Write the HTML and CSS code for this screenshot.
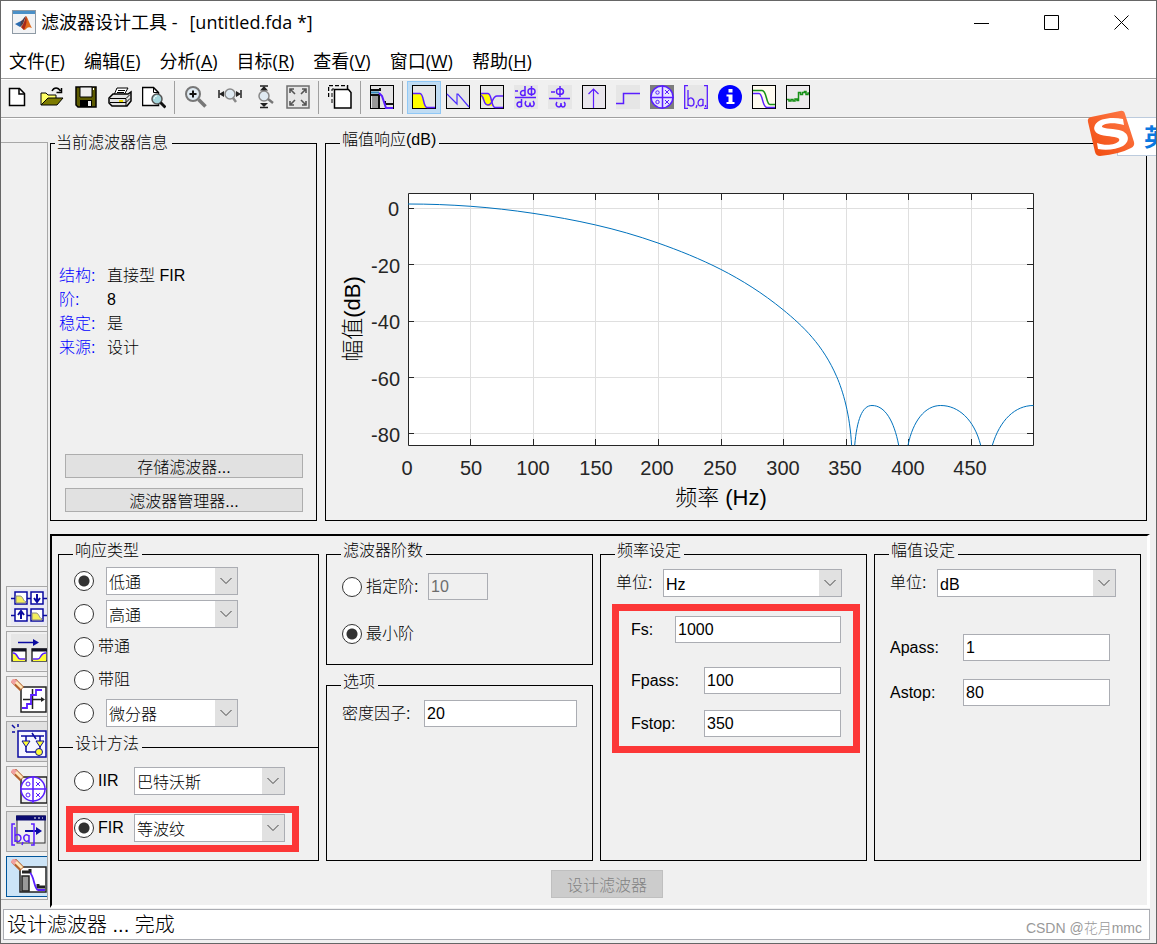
FILE: index.html
```
<!DOCTYPE html>
<html lang="zh-CN">
<head>
<meta charset="utf-8">
<title>滤波器设计工具 - [untitled.fda *]</title>
<link rel="stylesheet" href="styles.css">
</head>
<body>
<div class="window">
  <header class="titlebar">
    <svg class="app-icon" viewBox="0 0 24 24" aria-hidden="true">
      <rect x="0.5" y="0.5" width="23" height="23" fill="#f2f3f5" stroke="#8e9aa5"/>
      <path d="M1 2.5h22" stroke="#4a90c8" stroke-width="3"/>
      <path d="M3 14l6-3 3 2-4 4z" fill="#2b6cb0"/>
      <path d="M9 11c2-1 3-4 5-5l-3 8-3 3z" fill="#4c3f4f"/>
      <path d="M14 6c2 2 4 9 6 12-2-1-4-1-5 0s-2 2-3 2l-3-3c2-2 4-7 5-11z" fill="#e06a1c"/>
      <path d="M14 6c1 3 1 8-2 14l-3-3c2-1 4-7 5-11z" fill="#a82a1a"/>
    </svg>
    <h1 class="title"><span>滤波器设计工具 -</span><span>[untitled.fda *]</span></h1>
    <div class="caption-buttons">
      <button class="caption" aria-label="最小化"><svg viewBox="0 0 16 16"><path d="M0 8.5h15"/></svg></button>
      <button class="caption" aria-label="最大化"><svg viewBox="0 0 16 16"><path d="M.5 .5h14v14h-14z"/></svg></button>
      <button class="caption" aria-label="关闭"><svg viewBox="0 0 16 16"><path d="M.5 .5l14 14M14.500 .5l-14 14"/></svg></button>
    </div>
  </header>
  <nav class="menubar">
    <button>文件(<u>F</u>)</button>
    <button>编辑(<u>E</u>)</button>
    <button>分析(<u>A</u>)</button>
    <button>目标(<u>R</u>)</button>
    <button>查看(<u>V</u>)</button>
    <button>窗口(<u>W</u>)</button>
    <button>帮助(<u>H</u>)</button>
  </nav>
  <div class="toolbar">
    <button aria-label="新建"><svg viewBox="0 0 24 24"><path d="M3.500 3.500h10l5 5v12h-15z" fill="#fff" stroke="#000" stroke-width="1.500"/><path d="M13 3.500v5.500h5.500" fill="none" stroke="#000" stroke-width="1.500"/></svg></button>
    <button aria-label="打开"><svg viewBox="0 0 24 24"><path d="M1 20V8h5l2 2h8v4" fill="#ffff66" stroke="#000"/><path d="M1 20l7-7h15l-6 7z" fill="#7d7b00" stroke="#000"/><path d="M12 6c2-4 6-4 8.500 0M21.500 3v4.500h-5" fill="none" stroke="#000" stroke-width="1.500"/></svg></button>
    <button aria-label="保存"><svg viewBox="0 0 24 24"><path d="M2 2h20v20H4l-2-2z" fill="#5c5a00" stroke="#000" stroke-width="1.500"/><path d="M6 2h12v10H6z" fill="#efefef" stroke="#000"/><path d="M6 15h12v7H6z" fill="#000"/><path d="M14 16h3v5h-3z" fill="#efefef"/><path d="M19.500 3v2" stroke="#fff"/></svg></button>
    <button aria-label="打印"><svg viewBox="0 0 24 24"><path d="M6 10l3-7h11l-4 7" fill="#fff" stroke="#000"/><path d="M10 5.500h7M9 7.500h7" stroke="#000"/><path d="M1 13l4-4h15l3-2v9l-4 5H4l-3-3z" fill="#e4e4e4" stroke="#000" stroke-width="1.500"/><path d="M2 13.500h16l4-4M2 17.500h16l4-4M18 14v7" fill="none" stroke="#000"/><path d="M11 16h4" stroke="#e6d800" stroke-width="2"/></svg></button>
    <button aria-label="打印预览"><svg viewBox="0 0 24 24"><path d="M.5 2.500h11l5 5v13H.5z" fill="#fff" stroke="#000" stroke-width="1.500"/><path d="M11.500 2.500v5h5" fill="none" stroke="#000"/><circle cx="15" cy="14" r="5" fill="#a5d6dc" stroke="#555" stroke-width="1.500"/><path d="M12 14c0-2 2-3 3-3" stroke="#fff" fill="none"/><path d="M18.500 17.500l5 5" stroke="#111" stroke-width="3"/></svg></button>
    <span class="sep"></span>
    <button aria-label="放大"><svg viewBox="0 0 24 24"><circle cx="9" cy="9" r="7" fill="#dfeaf2" stroke="#777" stroke-width="2"/><path d="M5.500 9h7M9 5.500v7" stroke="#111" stroke-width="2"/><path d="M14.500 14.500l7 7" stroke="#777" stroke-width="3.500"/></svg></button>
    <button aria-label="X 轴缩放"><svg viewBox="0 0 24 24"><circle cx="12" cy="9" r="5" fill="#dfeaf2" stroke="#888" stroke-width="1.500"/><path d="M15 13l3 4" stroke="#888" stroke-width="2.500"/><path d="M1 5v8M23 5v8" stroke="#222" stroke-width="1.500"/><path d="M1 9l5-3v6zM23 9l-5-3v6z" fill="#222"/></svg></button>
    <button aria-label="Y 轴缩放"><svg viewBox="0 0 24 24"><circle cx="12" cy="11" r="5" fill="#dfeaf2" stroke="#888" stroke-width="1.500"/><path d="M16 14l5 4" stroke="#777" stroke-width="2.500"/><path d="M8 1h8M8 22.500h8" stroke="#222" stroke-width="1.500"/><path d="M12 1l-4 4.500h8zM12 22l-4-4h8z" fill="#222"/></svg></button>
    <button aria-label="完整视图"><svg viewBox="0 0 24 24"><rect x="1" y="1" width="22" height="22" fill="#e6e6e6" stroke="#6d6d6d" stroke-width="1.500"/><path d="M4 8V4h4M16 4h4v4M20 16v4h-4M8 20H4v-4M4 4l5 5M20 4l-5 5M20 20l-5-5M4 20l5-5" fill="none" stroke="#555" stroke-width="1.600"/></svg></button>
    <span class="sep"></span>
    <button aria-label="复制图窗"><svg viewBox="0 0 24 24"><path d="M.5 12V.5h19V4" fill="none" stroke="#000" stroke-width="1.500" stroke-dasharray="4 2"/><path d="M4 18V4h4" fill="none" stroke="#000" stroke-dasharray="4 2"/><path d="M6.500 4.500h14l2.500 3v15.500H6.500z" fill="#fff" stroke="#000" stroke-width="1.500"/></svg></button>
    <span class="sep"></span>
    <button aria-label="滤波器设定"><svg viewBox="0 0 24 24"><rect x=".5" y=".5" width="23" height="23" fill="#e4e4e4" stroke="#000"/><path d="M1 5h9V3M1 10h8v13M15 16v3h8" fill="none" stroke="#111" stroke-width="2"/><path d="M1 7.500h8" stroke="#38b" stroke-width="2"/><path d="M9 8l3 3 4 12h7" fill="none" stroke="#5a1eff" stroke-width="2"/><path d="M2 11h6v12H2z" fill="#999"/></svg></button>
    <span class="sep"></span>
    <button class="active" aria-label="幅值响应"><svg viewBox="0 0 24 24"><rect x=".5" y=".5" width="23" height="23" fill="#e6e6e6" stroke="#000"/><path d="M1 9h8l5 14H1z" fill="#ff0"/><path d="M1 8.500h7c4 0 3 14 7 14h8" fill="none" stroke="#5a1eff" stroke-width="1.500"/></svg></button>
    <button aria-label="相位响应"><svg viewBox="0 0 24 24"><rect x=".5" y=".5" width="23" height="23" fill="#e6e6e6" stroke="#000"/><path d="M1 9l10 10V9h1l11 13" fill="none" stroke="#4b2cff" stroke-width="1.200"/></svg></button>
    <button aria-label="幅值和相位响应"><svg viewBox="0 0 24 24"><rect x=".5" y=".5" width="23" height="23" fill="#e6e6e6" stroke="#000"/><path d="M1 9h8l4 10-1 2H7L1 12z" fill="#ff0"/><path d="M1 8.500h7c4 0 3 14 7 14h8" fill="none" stroke="#5a1eff" stroke-width="1.500"/><path d="M1 10c4 3 2 10 7 10 5 0 4-9 9-9h6" fill="none" stroke="#5a1eff" stroke-width="1.500"/></svg></button>
    <button aria-label="群延迟"><svg viewBox="0 0 24 24"><rect width="24" height="24" fill="#e6e6e6"/><g fill="none" stroke="#5a1eff" stroke-width="1.500"><path d="M1 6h3M11 1v10M11 6c-5-2-6 4.500-2 4.500 1 0 2-1 2-2M17.500 1v10M14 6.500a3.500 3 0 1 0 7 0a3.500 3 0 1 0-7 0M1 12.500h21M7.500 14v8M7.500 17.500c-5-2-6 4-2 4.500 1 0 2-1 2-2M12 16c-2 3 0 5.500 2 5.500s2-2 2-4c0 3 1 4 2 4 2 0 3-3 1-5.500"/></g></svg></button>
    <button aria-label="相位延迟"><svg viewBox="0 0 24 24"><rect width="24" height="24" fill="#e6e6e6"/><g fill="none" stroke="#5a1eff" stroke-width="1.500"><path d="M3 7h4M12 1v11M8.500 6.500a3.500 3 0 1 0 7 0a3.500 3 0 1 0-7 0M1 13.500h21M9 17c-2 3 0 5 2 5s2-2 2-4c0 3 1 4 2 4 2 0 3-3 1-5"/></g></svg></button>
    <button aria-label="冲激响应"><svg viewBox="0 0 24 24"><rect x=".5" y=".5" width="23" height="23" fill="#e9e6ec" stroke="#000"/><path d="M11.500 23V4M6.500 9l5-5 5 5" fill="none" stroke="#5a1eff" stroke-width="1.200"/></svg></button>
    <button aria-label="阶跃响应"><svg viewBox="0 0 24 24"><rect width="24" height="24" fill="#e6e6e6"/><path d="M0 18.500h7.500v-10H24" fill="none" stroke="#5a1eff" stroke-width="1.500"/></svg></button>
    <button aria-label="零极点图"><svg viewBox="0 0 24 24"><rect width="24" height="24" fill="#7d7d7d"/><circle cx="12" cy="12" r="11" fill="#e9e6ff" stroke="#5a1eff" stroke-width="1.500"/><path d="M12.500 0v24M0 12.500h24" stroke="#5a1eff" stroke-width="1.500"/><path d="M15 5l4 4M19 5l-4 4M15 15l4 4M19 15l-4 4" stroke="#5a1eff"/><circle cx="7.500" cy="7.500" r="1.700" fill="none" stroke="#5a1eff"/><circle cx="7.500" cy="17" r="1.700" fill="none" stroke="#5a1eff"/></svg></button>
    <button aria-label="滤波器系数"><svg viewBox="0 0 24 24"><rect width="24" height="24" fill="#e6e6e6"/><g fill="none" stroke="#5a1eff" stroke-width="1.300"><path d="M4 .7H.7v22.600H4M20 .7h3.300v22.600H20M4 5v16M4 15c2-4 6-2 6 2.500s-4 4-6 2M13 20l-1 3M19 14v7M19 15c-2-2-5 0-5 3s3 4 5 1.500M21.500 20v2"/></g></svg></button>
    <button aria-label="滤波器信息"><svg viewBox="0 0 24 24"><circle cx="12" cy="12" r="12" fill="#00f"/><path d="M10.500 4h4v3.500h-4zM8.500 9.500h6V17h2v2h-8v-2h2v-5.500h-2z" fill="#fff"/></svg></button>
    <button aria-label="幅值响应估计"><svg viewBox="0 0 24 24"><rect x=".5" y=".5" width="23" height="23" fill="#fffbf0" stroke="#000"/><path d="M1 5.500h9c5 0 4 14 8 14h5" fill="none" stroke="#169016" stroke-width="1.600"/><path d="M1 8.500h6c4 0 3 14 8 14h8" fill="none" stroke="#5a1eff" stroke-width="1.500"/></svg></button>
    <button aria-label="舍入噪声功率谱"><svg viewBox="0 0 24 24"><rect x=".5" y=".5" width="23" height="23" fill="#eceaec" stroke="#000"/><path d="M1 14.500h2v1.500h2v-1.500h2v1.500h2v-2h2v1.500h1.500v-8h2v2h2v-2h2v-1h1.500v3h2v-1.500h1" fill="none" stroke="#169016" stroke-width="1.500"/></svg></button>
  </div>

  <main class="workspace">
    <aside class="sidebar">
      <button aria-label="创建多速率滤波器"><svg viewBox="0 0 36 36"><rect width="36" height="36" fill="#e9e9f4"/><path d="M0 9.500h36M0 26.500h36" stroke="#0a0aa0" stroke-width="1.500"/><g fill="#fff" stroke="#0a0aa0" stroke-width="1.500"><path d="M4 3h12v12H4zM20 3h12v12H20zM4 20h12v12H4zM20 20h12v12H20z"/></g><path d="M5 7h4c3 0 3 5 6 6v1H5zM21 24h4c3 0 3 5 6 6v1H21z" fill="#f3ef5c" stroke="#888"/><path d="M26 5v7M23 9l3 4 3-4M10 30v-7M7 26l3-4 3 4" fill="none" stroke="#0a0aa0" stroke-width="2"/></svg></button>
      <button aria-label="变换滤波器"><svg viewBox="0 0 36 36"><rect width="36" height="36" fill="#e6e6e6"/><path d="M7 8.500h16" stroke="#0a0aa0" stroke-width="1.500"/><path d="M22 5l6 3.500-6 3.500z" fill="#0a0aa0"/><path d="M1 15h14v12H1zM21 15h15v12H21z" fill="#fff" stroke="#333" stroke-width="1.500"/><path d="M2 20c5 0 4 5 7 5h5v2H2zM35 20c-6 0-5 5-8 5h-5v2h13z" fill="#ff3"/><path d="M2 19c5 0 4 6 7 6h5M35 19c-6 0-5 6-8 6h-5" fill="none" stroke="#5a1eff" stroke-width="1.500"/><path d="M1 16h14M21 16h15" stroke="#112" stroke-width="3"/></svg></button>
      <button aria-label="设置量化参数"><svg viewBox="0 0 36 36"><rect x="10" y="8" width="25" height="25" fill="#fff" stroke="#222" stroke-width="1.500"/><path d="M21.500 10v20M12 20.500h20" stroke="#222" stroke-width="1.500"/><path d="M30 18l4 2.500-4 2.500z" fill="#222"/><path d="M11 29h5v-4h4v-9h5v-5h6" fill="none" stroke="#5a1eff" stroke-width="1.800"/><path d="M2 1l9 9" stroke="#b4622d" stroke-width="6"/><path d="M1 1l4 3" stroke="#f0a0a0" stroke-width="5"/><path d="M5 3l6 6" stroke="#ffe6bb" stroke-width="3"/></svg></button>
      <button class="shade" aria-label="实现模型"><svg viewBox="0 0 36 36"><rect x="7" y="7" width="28" height="26" fill="#f7f7ff" stroke="#0a0aa0" stroke-width="1.500"/><path d="M1 1l3 3M7 0v3M1 8h3" stroke="#0a0aa0" stroke-width="1.500"/><path d="M10 12h23M15 12v16M29 12v16M15 28h12M21 9l4 6" fill="none" stroke="#0a0aa0" stroke-width="1.500"/><path d="M11 17h8l-4 6zM25 17h8l-4 6z" fill="#ff3" stroke="#0a0aa0"/><circle cx="28" cy="28" r="3.500" fill="#ff3" stroke="#0a0aa0"/></svg></button>
      <button aria-label="零极点编辑器"><svg viewBox="0 0 36 36"><rect x="10" y="8" width="26" height="26" fill="#eee" stroke="#222" stroke-width="1.500"/><circle cx="22" cy="20" r="12" fill="#fff" stroke="#5a1eff" stroke-width="1.500"/><path d="M22 7v27M9 20h27" stroke="#5a1eff" stroke-width="1.500"/><path d="M25 13l4 4M29 13l-4 4M25 24l4 4M29 24l-4 4" stroke="#5a1eff"/><circle cx="17" cy="15" r="2" fill="none" stroke="#5a1eff"/><circle cx="17" cy="26" r="2" fill="none" stroke="#5a1eff"/><path d="M2 1l9 9" stroke="#b4622d" stroke-width="6"/><path d="M1 1l4 3" stroke="#f0a0a0" stroke-width="5"/><path d="M5 3l6 6" stroke="#ffe6bb" stroke-width="3"/></svg></button>
      <button class="shade" aria-label="导入滤波器"><svg viewBox="0 0 36 36"><rect x="6" y="2" width="28" height="27" fill="#eee" stroke="#333"/><path d="M5 4h30" stroke="#0a0a70" stroke-width="5"/><path d="M23 4h9" stroke="#fff" stroke-dasharray="2 2"/><path d="M14 17h12" stroke="#0a0aa0" stroke-width="2"/><path d="M25 13l6 4-6 4z" fill="#0a0aa0"/><path d="M4 10H1v21h3M20 10h3v21h-3M4 13v15M4 22c2-3 6-1 6 2s-3 5-6 2M12 28l-1 3M18 21v8M18 22c-3-3-6 0-5 3s3 3 5 1" fill="none" stroke="#5a1eff" stroke-width="1.500"/></svg></button>
      <button class="active" aria-label="设计滤波器面板"><svg viewBox="0 0 36 36"><rect x="9" y="8" width="26" height="25" fill="#fff" stroke="#222" stroke-width="1.500"/><path d="M11 17h7v15h-7z" fill="#999" stroke="#222" stroke-width="1.500"/><path d="M11 13h8v-3M27 25v3h7" fill="none" stroke="#222" stroke-width="3"/><path d="M19 14c4 2 4 16 8 17h7" fill="none" stroke="#5a1eff" stroke-width="1.800"/><path d="M2 1l9 9" stroke="#b4622d" stroke-width="6"/><path d="M1 1l4 3" stroke="#f0a0a0" stroke-width="5"/><path d="M5 3l6 6" stroke="#ffe6bb" stroke-width="3"/></svg></button>
    </aside>

    <div class="content">
      <div class="overview">
        <fieldset class="group info">
          <legend>当前滤波器信息</legend>
          <dl>
            <dt>结构:</dt><dd>直接型 FIR</dd>
            <dt>阶:</dt><dd>8</dd>
            <dt>稳定:</dt><dd>是</dd>
            <dt>来源:</dt><dd>设计</dd>
          </dl>
          <div class="info-actions">
            <button class="push">存储滤波器...</button>
            <button class="push">滤波器管理器...</button>
          </div>
        </fieldset>
        <fieldset class="group response">
          <legend>幅值响应(dB)</legend>
          <svg class="chart" viewBox="326 156 820 363" role="img" aria-label="幅值响应曲线">
            <rect x="408.500" y="193.500" width="625" height="252" fill="#fff"/>
            <path class="grid" d="M470.500 194v251M533.500 194v251M595.500 194v251M658.500 194v251M721.500 194v251M783.500 194v251M846.500 194v251M908.500 194v251M971.500 194v251M409 208.500h624M409 264.500h624M409 321.500h624M409 377.500h624M409 433.500h624"/>
            <path class="axis" d="M408.500 193.500h625v252h-625zM470.500 194v6m0 245v-6M533.500 194v6m0 245v-6M595.500 194v6m0 245v-6M658.500 194v6m0 245v-6M721.500 194v6m0 245v-6M783.500 194v6m0 245v-6M846.500 194v6m0 245v-6M908.500 194v6m0 245v-6M971.500 194v6m0 245v-6M409 208.500h5m619 0h-6M409 264.500h5m619 0h-6M409 321.500h5m619 0h-6M409 377.500h5m619 0h-6M409 433.500h5m619 0h-6"/>
            <path class="curve" d="M408 204C450 204 491 207 533 213.300C575 219.600 616 228.100 658 243C700 257.900 742 276.300 783 309.700C803 326 823 345 836.700 376.700C843 391 850 415 851.600 445.300M854.700 445.300C857 420 862 405.500 872 405.500C885 405.500 894 421 898.700 445.300M908 445.300C913 421 925 405.500 940.700 405.500C958 405.500 974 419 980.700 445.300M992.300 445.300C1000 420 1015 405.500 1033.500 405.500"/>
            <g class="ticks y">
              <text x="399" y="216">0</text><text x="400" y="273">-20</text><text x="400" y="329">-40</text><text x="400" y="386">-60</text><text x="400" y="442">-80</text>
            </g>
            <g class="ticks x">
              <text x="407" y="475">0</text><text x="471" y="475">50</text><text x="533" y="475">100</text><text x="596" y="475">150</text><text x="657" y="475">200</text><text x="720" y="475">250</text><text x="783" y="475">300</text><text x="845" y="475">350</text><text x="908" y="475">400</text><text x="970" y="475">450</text>
            </g>
            <text class="axis-label" x="721" y="505">频率 (Hz)</text>
            <text class="axis-label" transform="translate(360 319) rotate(-90)">幅值(dB)</text>
          </svg>
        </fieldset>
      </div>

      <form class="design">
        <div class="panels">
          <div class="stack joined">
            <fieldset class="group types">
              <legend>响应类型</legend>
              <div class="row"><input type="radio" name="type" id="t1" aria-label="低通" checked><span class="select"><select aria-label="低通类型"><option>低通</option></select><svg viewBox="0 0 12 8"><path d="M.5 1l5.500 5.500L11.500 1"/></svg></span></div>
              <div class="row"><input type="radio" name="type" id="t2" aria-label="高通"><span class="select"><select aria-label="高通类型"><option>高通</option></select><svg viewBox="0 0 12 8"><path d="M.5 1l5.500 5.500L11.500 1"/></svg></span></div>
              <div class="row text"><input type="radio" name="type" id="t3"><label for="t3">带通</label></div>
              <div class="row text"><input type="radio" name="type" id="t4"><label for="t4">带阻</label></div>
              <div class="row"><input type="radio" name="type" id="t5" aria-label="其他"><span class="select"><select aria-label="其他类型"><option>微分器</option></select><svg viewBox="0 0 12 8"><path d="M.5 1l5.500 5.500L11.500 1"/></svg></span></div>
            </fieldset>
            <fieldset class="group method">
              <legend>设计方法</legend>
              <div class="row text"><input type="radio" name="method" id="iir"><label for="iir">IIR</label><span class="select"><select aria-label="IIR 方法"><option>巴特沃斯</option></select><svg viewBox="0 0 12 8"><path d="M.5 1l5.500 5.500L11.500 1"/></svg></span></div>
              <div class="row text marked"><input type="radio" name="method" id="fir" checked><label for="fir">FIR</label><span class="select"><select aria-label="FIR 方法"><option>等波纹</option></select><svg viewBox="0 0 12 8"><path d="M.5 1l5.500 5.500L11.500 1"/></svg></span></div>
            </fieldset>
          </div>

          <div class="stack">
            <fieldset class="group order">
              <legend>滤波器阶数</legend>
              <div class="row text"><input type="radio" name="order" id="o1"><label for="o1">指定阶:</label><input class="field" type="text" value="10" aria-label="阶数" disabled></div>
              <div class="row text"><input type="radio" name="order" id="o2" checked><label for="o2">最小阶</label></div>
            </fieldset>
            <fieldset class="group options">
              <legend>选项</legend>
              <div class="row"><label for="density">密度因子:</label><input class="field" type="text" id="density" value="20"></div>
            </fieldset>
          </div>

          <fieldset class="group specs">
            <legend>频率设定</legend>
            <div class="row unit"><label for="funit">单位:</label><span class="select"><select id="funit"><option>Hz</option></select><svg viewBox="0 0 12 8"><path d="M.5 1l5.500 5.500L11.500 1"/></svg></span></div>
            <div class="highlight">
              <div class="row short"><label for="fs">Fs:</label><input class="field" type="text" id="fs" value="1000"></div>
              <div class="row long"><label for="fpass">Fpass:</label><input class="field" type="text" id="fpass" value="100"></div>
              <div class="row long"><label for="fstop">Fstop:</label><input class="field" type="text" id="fstop" value="350"></div>
            </div>
          </fieldset>

          <fieldset class="group specs">
            <legend>幅值设定</legend>
            <div class="row unit"><label for="munit">单位:</label><span class="select"><select id="munit"><option>dB</option></select><svg viewBox="0 0 12 8"><path d="M.5 1l5.500 5.500L11.500 1"/></svg></span></div>
            <div class="magnitudes">
              <div class="row long"><label for="apass">Apass:</label><input class="field" type="text" id="apass" value="1"></div>
              <div class="row long"><label for="astop">Astop:</label><input class="field" type="text" id="astop" value="80"></div>
            </div>
          </fieldset>
        </div>
        <div class="submit"><button class="push" type="button" disabled>设计滤波器</button></div>
      </form>
    </div>
  </main>

  <footer class="status"><span>设计滤波器 ... 完成</span><span class="credit">CSDN @花月mmc</span></footer>

  <div class="ime">
    <svg viewBox="0 0 50 48" aria-hidden="true"><defs><linearGradient id="ime-fill" x1="1" y1="0" x2="0" y2="1"><stop offset="0" stop-color="#ff7b4a"/><stop offset="1" stop-color="#f04a0c"/></linearGradient></defs><path d="M4 7L33 1q4-1 5 3l9 28q1 4-3 6-11 6-31 8-4 0-5-4L1 12q-1-4 3-5z" fill="url(#ime-fill)"/><path d="M36 9L37 15C27 12 17 13 15 16C14 19 24 18 32 20C42 22 44 31 36 36C30 39 20 41 11 39L10 33C18 36 29 35 32 31C34 27 27 27 20 26C10 25 5 21 8 15C12 8 25 7 36 9z" fill="#fff"/></svg>
    <span>英</span>
  </div>
</div>
</body>
</html>
```
FILE: styles.css
```
* { box-sizing: border-box; }

body {
  margin: 0;
  color: #000;
  font: 16px/18px "Liberation Sans", "Noto Sans CJK SC", sans-serif;
  font-weight: 300;
}

button, input, select { font: inherit; color: inherit; }
button { padding: 0; border: 0; background: none; }

.window {
  position: relative;
  display: flex;
  flex-direction: column;
  min-height: 100vh;
  overflow: hidden;
  border: 1px solid #666;
  background: #f0f0f0;
}

/* Title and menus */
.titlebar {
  display: flex;
  align-items: center;
  height: 42px;
  padding-left: 11px;
  background: #fff;
}
.app-icon { width: 24px; height: 24px; }
.title {
  flex: 1;
  display: flex;
  gap: 12px;
  margin: 0 0 0 5px;
  font: 18px/24px "Open Sans", "Noto Sans CJK SC", sans-serif;
}
.caption-buttons { display: flex; }
.caption {
  display: grid;
  place-items: center;
  width: 70px;
  height: 42px;
  padding: 2px 0 0 2px;
}
.caption svg { width: 16px; height: 16px; fill: none; stroke: #000; }

.menubar {
  display: flex;
  gap: 19px;
  height: 35px;
  padding-left: 8px;
  background: #fff;
}
.menubar button { font: 18px/34px "Open Sans", "Noto Sans CJK SC", sans-serif; }
.menubar u { text-underline-offset: 2px; text-decoration-thickness: 1px; }

/* Toolbar */
.toolbar {
  display: flex;
  align-items: center;
  height: 40px;
  padding-bottom: 2px;
  border-top: 1px solid #a0a0a0;
  border-bottom: 1px solid #a0a0a0;
  box-shadow: inset 0 1px #fff, 0 1px #fff;
}
.toolbar button { display: grid; place-items: center; width: 34px; height: 33px; }
.toolbar svg { width: 24px; height: 24px; }
.toolbar .active { border: 1px solid #90c8f6; background: #c0dcf3; }
.sep { width: 8px; height: 33px; }
.sep::before {
  content: "";
  display: block;
  width: 1px;
  height: 33px;
  margin-left: 3px;
  background: #a0a0a0;
}

/* Work area */
.workspace { flex: 1; display: flex; gap: 2px; padding-right: 6px; }

.sidebar {
  display: flex;
  flex-direction: column;
  justify-content: flex-end;
  gap: 4px;
  width: 47px;
  margin: 24px 0 8px;
  padding: 0 0 2px 5px;
  border: solid #a8a8a8;
  border-width: 1px 1px 1px 0;
  overflow: hidden;
}
.sidebar button {
  display: flex;
  align-items: center;
  height: 41px;
  padding-left: 4px;
  border: 1px solid #a8a8a8;
  border-right: 0;
  overflow: hidden;
}
.sidebar svg { flex: none; width: 36px; height: 36px; }
.sidebar .shade { background: #e1e1e1; }
.sidebar .active { border-color: #00559b; background: #cce4f7; }

.content { flex: 1; display: flex; flex-direction: column; min-width: 0; }

.overview {
  flex: 1;
  display: grid;
  grid-template-columns: 267fr 822fr;
  gap: 8px;
  padding: 13px 3px 13px 0;
}

.group {
  display: flex;
  flex-direction: column;
  min-width: 0;
  margin: 0;
  padding: 0;
  border: 1px solid #000;
}
.group legend {
  height: 24px;
  margin-left: 14px;
  padding: 0 3px 6px 2px;
  line-height: 18px;
}

.info legend { margin-left: 4px; padding: 3px 4px 3px 1px; }
.info dl {
  display: grid;
  grid-template-columns: 48px 1fr;
  margin: 109px 0 24px;
  padding-left: 8px;
  line-height: 24px;
}
.info dt { color: #00f; }
.info dd { margin: 0; }
.info-actions {
  display: grid;
  gap: 10px;
  margin-top: auto;
  padding: 0 13px 8px 14px;
}

.push {
  height: 24px;
  padding-top: 3px;
  border: 1px solid #adadad;
  background: #e1e1e1;
  text-align: center;
}
.push:disabled { background: #ccc; border-color: #bfbfbf; color: #838383; }

.chart { display: block; width: 100%; margin: auto 0; }
.grid { fill: none; stroke: #dfdfdf; }
.axis { fill: none; stroke: #262626; }
.curve { fill: none; stroke: #0072bd; }
.ticks { fill: #262626; font-size: 20px; }
.ticks.x { text-anchor: middle; }
.ticks.y { text-anchor: end; }
.axis-label { font-size: 22px; text-anchor: middle; }

/* Design form */
.design {
  padding: 6px 6px 7px;
  border: solid #fff;
  border-width: 2px 3px 3px 2px;
  border-top-color: #000;
  border-left-color: #000;
}
.panels { display: grid; grid-template-columns: 261fr 267fr 267fr 267fr; gap: 7px; }
.stack { display: flex; flex-direction: column; gap: 8px; min-width: 0; }
.stack.joined { gap: 0; }
.stack > :last-child { flex: 1; }
.stack legend { margin-left: -1px; }

.row { display: flex; align-items: center; min-width: 0; }

.types { gap: 5px; padding: 1px 80px 20px 15px; border-bottom: 0; }
.types .row { height: 28px; gap: 12px; }
.types .row.text { gap: 4px; }

.method { gap: 19px; margin-top: -12px; padding: 8px 33px 18px 15px; }
.method .row { gap: 4px; }
.method label { width: 32px; }
.marked { position: relative; }
.marked::after {
  content: "";
  position: absolute;
  inset: -8px -14px -10px -8px;
  border: 7px solid #fc3737;
  pointer-events: none;
}

.order { gap: 20px; padding: 7px 15px 17px; }
.order .row { height: 27px; gap: 4px; }
.order label { width: 58px; }
.order .field { flex: none; width: 60px; }

.options { padding: 3px 15px; }
.options label { width: 82px; }

.specs { padding: 3px 0; }
.unit { padding: 0 24px 0 15px; }
.unit label { width: 47px; }
.short label { width: 44px; }
.long label { width: 73px; }
.highlight {
  display: grid;
  gap: 16px;
  margin: 7px 6px 0 11px;
  padding: 5px 12px 9px;
  border: 7px solid #fc3737;
}
.highlight .short { margin-bottom: 8px; }
.magnitudes { display: grid; gap: 18px; padding: 37px 30px 0 15px; }

input[type="radio"] {
  appearance: none;
  flex: none;
  width: 20px;
  height: 20px;
  margin: 0;
  border: 1px solid #333;
  border-radius: 50%;
  background: #fff;
}
input[type="radio"]:checked { background: radial-gradient(circle, #333 5px, #fff 6px); }

.field {
  flex: 1;
  min-width: 0;
  height: 27px;
  padding: 0 2px;
  border: 1px solid #abadb3;
  background: #fff;
}
.field:disabled { background: #f0f0f0; color: #6d6d6d; }

.select { position: relative; flex: 1; display: flex; min-width: 0; height: 28px; }
.select select {
  appearance: none;
  width: 100%;
  padding: 3px 22px 0 2px;
  border: 1px solid #abadb3;
  border-radius: 0;
  background: linear-gradient(#e1e1e1, #e1e1e1) right / 22px 100% no-repeat #fff;
}
.select svg {
  position: absolute;
  top: 10px;
  right: 6px;
  width: 12px;
  height: 8px;
  fill: none;
  stroke: #444;
  pointer-events: none;
}

.submit { display: flex; justify-content: center; padding: 9px 0 0 15px; }
.submit .push { width: 112px; height: 28px; }

/* Status bar */
.status {
  display: flex;
  align-items: center;
  justify-content: space-between;
  height: 31px;
  margin: 1px 6px 3px 2px;
  padding: 0 7px 0 3px;
  border: 1px solid #abadb3;
  background: #fff;
  font-size: 20px;
}
.credit { padding-top: 6px; color: #999; font-size: 14px; }

/* Input-method badge floating over the window */
.ime {
  position: absolute;
  top: 109px;
  right: 0;
  display: flex;
  width: 69px;
  height: 48px;
}
.ime::before {
  content: "";
  position: absolute;
  inset: 7px 0 2px 30px;
  border: 1px solid #bccbdd;
  border-right: 0;
  background: #fff;
}
.ime svg { position: relative; flex: none; width: 50px; height: 48px; }
.ime span {
  position: relative;
  flex: none;
  margin-left: 7px;
  color: #0a78e0;
  font: bold 24px/52px "Noto Sans CJK SC", sans-serif;
}
```
